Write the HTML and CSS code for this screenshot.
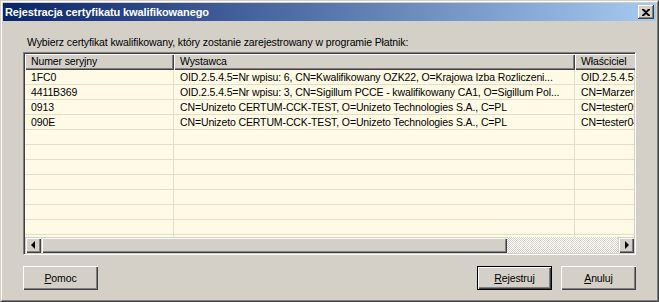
FILE: index.html
```html
<!DOCTYPE html>
<html lang="pl">
<head>
    <meta charset="UTF-8">
    <title>Rejestracja certyfikatu kwalifikowanego</title>
    <link rel="stylesheet" href="styles.css">
</head>
<body>
    <div class="window">
        <div class="frame">
            <div class="titlebar">
                <span class="title">Rejestracja certyfikatu kwalifikowanego</span>
                <button class="close" type="button">
                    <svg width="8" height="7" viewBox="0 0 8 7">
                        <path d="M0 0h2l2 2 2-2h2v1L5 3.5 8 6v1H6L4 5 2 7H0V6l3-2.5L0 1z" fill="#000"/>
                    </svg>
                </button>
            </div>
            <div class="content">
                <p class="prompt">Wybierz certyfikat kwalifikowany, który zostanie zarejestrowany w programie Płatnik:</p>
                <div class="listview">
                    <div class="lv-head">
                        <div class="hcell c1">Numer seryjny</div>
                        <div class="hcell c2">Wystawca</div>
                        <div class="hcell c3">Właściciel</div>
                    </div>
                    <div class="lv-body">
                        <div class="row"><div class="cell c1">1FC0</div><div class="cell c2">OID.2.5.4.5=Nr wpisu: 6, CN=Kwalifikowany OZK22, O=Krajowa Izba Rozliczeni...</div><div class="cell c3">OID.2.5.4.5=Nr</div></div>
                        <div class="row"><div class="cell c1">4411B369</div><div class="cell c2">OID.2.5.4.5=Nr wpisu: 3, CN=Sigillum PCCE - kwalifikowany CA1, O=Sigillum Pol...</div><div class="cell c3">CN=Marzena</div></div>
                        <div class="row"><div class="cell c1">0913</div><div class="cell c2">CN=Unizeto CERTUM-CCK-TEST, O=Unizeto Technologies S.A., C=PL</div><div class="cell c3">CN=tester05</div></div>
                        <div class="row"><div class="cell c1">090E</div><div class="cell c2">CN=Unizeto CERTUM-CCK-TEST, O=Unizeto Technologies S.A., C=PL</div><div class="cell c3">CN=tester04</div></div>
                        <div class="row"><div class="cell c1"></div><div class="cell c2"></div><div class="cell c3"></div></div>
                        <div class="row"><div class="cell c1"></div><div class="cell c2"></div><div class="cell c3"></div></div>
                        <div class="row"><div class="cell c1"></div><div class="cell c2"></div><div class="cell c3"></div></div>
                        <div class="row"><div class="cell c1"></div><div class="cell c2"></div><div class="cell c3"></div></div>
                        <div class="row"><div class="cell c1"></div><div class="cell c2"></div><div class="cell c3"></div></div>
                        <div class="row"><div class="cell c1"></div><div class="cell c2"></div><div class="cell c3"></div></div>
                        <div class="row"><div class="cell c1"></div><div class="cell c2"></div><div class="cell c3"></div></div>
                        <div class="row"><div class="cell c1"></div><div class="cell c2"></div><div class="cell c3"></div></div>
                    </div>
                    <div class="hscroll">
                        <div class="sb-btn"><span class="arrow left"></span></div>
                        <div class="sb-thumb"></div>
                        <div class="sb-track"></div>
                        <div class="sb-btn"><span class="arrow right"></span></div>
                    </div>
                </div>
                <div class="buttons">
                    <button class="btn" type="button"><u>P</u>omoc</button>
                    <span class="spacer"></span>
                    <button class="btn default" type="button"><u>R</u>ejestruj</button>
                    <button class="btn" type="button"><u>A</u>nuluj</button>
                </div>
            </div>
        </div>
    </div>
</body>
</html>
```

FILE: styles.css
```css
* {
    margin: 0;
    padding: 0;
    box-sizing: border-box;
}
body {
    width: 659px;
    height: 302px;
    font-family: 'Liberation Sans', Arial, sans-serif;
    font-size: 10.5px;
    letter-spacing: -0.12px;
    color: #000;
    background-color: #d4d0c8;
    overflow: hidden;
}
.window {
    width: 659px;
    height: 302px;
    border: 1px solid;
    border-color: #d4d0c8 #404040 #404040 #d4d0c8;
}
.frame {
    height: 100%;
    border: 1px solid;
    border-color: #fff #808080 #808080 #fff;
    padding: 1px;
    display: flex;
    flex-direction: column;
}
.titlebar {
    height: 18px;
    display: flex;
    align-items: center;
    padding: 0 2px 0 2px;
    background: linear-gradient(to right, #0a246a, #a6caf0);
}
.title {
    flex: 1;
    color: #fff;
    font-weight: bold;
    font-size: 11px;
    letter-spacing: -0.1px;
    white-space: nowrap;
}
.close {
    width: 16px;
    height: 14px;
    display: flex;
    align-items: center;
    justify-content: center;
    background-color: #d4d0c8;
    border: none;
    box-shadow: inset -1px -1px #404040, inset 1px 1px #fff, inset -2px -2px #808080;
}
.content {
    flex: 1;
    padding: 15px 20px 0 20px;
    display: flex;
    flex-direction: column;
}
.prompt {
    line-height: 13px;
    padding-left: 4px;
    margin-bottom: 3px;
    white-space: nowrap;
}
.listview {
    height: 203px;
    display: flex;
    flex-direction: column;
    border: 1px solid;
    border-color: #808080 #fff #fff #808080;
    box-shadow: inset 1px 1px #404040, inset -1px -1px #d4d0c8;
    padding: 1px;
    overflow: hidden;
}
.lv-head {
    display: flex;
    height: 16px;
    flex-shrink: 0;
    white-space: nowrap;
}
.hcell {
    height: 16px;
    line-height: 15px;
    padding-left: 6px;
    background-color: #d4d0c8;
    box-shadow: inset 1px 1px #fff, inset -1px -1px #404040, inset -2px -2px #808080;
    flex-shrink: 0;
    overflow: hidden;
}
.c1 {
    width: 149px;
}
.c2 {
    width: 401px;
}
.c3 {
    width: 120px;
}
.lv-body {
    flex: 1;
    background-color: #fffae5;
    overflow: hidden;
}
.row {
    display: flex;
    height: 15px;
    border-bottom: 1px solid #e6dec4;
    white-space: nowrap;
}
.cell {
    line-height: 14px;
    padding-left: 6px;
    border-right: 1px solid #e6dec4;
    flex-shrink: 0;
    overflow: hidden;
}
.hscroll {
    height: 16px;
    flex-shrink: 0;
    display: flex;
}
.sb-btn {
    width: 16px;
    height: 16px;
    display: flex;
    align-items: center;
    justify-content: center;
    background-color: #d4d0c8;
    box-shadow: inset 1px 1px #d4d0c8, inset 2px 2px #fff, inset -1px -1px #404040, inset -2px -2px #808080;
}
.arrow {
    width: 0;
    height: 0;
    border-top: 4px solid transparent;
    border-bottom: 4px solid transparent;
}
.arrow.left {
    border-right: 4px solid #000;
    margin-right: 1px;
}
.arrow.right {
    border-left: 4px solid #000;
    margin-left: 1px;
}
.sb-thumb {
    width: 466px;
    background-color: #d4d0c8;
    box-shadow: inset 1px 1px #d4d0c8, inset 2px 2px #fff, inset -1px -1px #404040, inset -2px -2px #808080;
}
.sb-track {
    flex: 1;
    background-image: conic-gradient(#fff 25%, #d4d0c8 0 50%, #fff 0 75%, #d4d0c8 0);
    background-size: 2px 2px;
}
.buttons {
    display: flex;
    margin-top: 11px;
    gap: 9px;
}
.spacer {
    flex: 1;
}
.btn {
    width: 75px;
    height: 24px;
    font-family: 'Liberation Sans', Arial, sans-serif;
    font-size: 10.5px;
    letter-spacing: -0.12px;
    color: #000;
    background-color: #d4d0c8;
    border: none;
    box-shadow: inset 1px 1px #fff, inset -1px -1px #404040, inset -2px -2px #808080;
}
.btn.default {
    border: 1px solid #000;
    box-shadow: inset 1px 1px #fff, inset -1px -1px #404040, inset -2px -2px #808080;
}
```
